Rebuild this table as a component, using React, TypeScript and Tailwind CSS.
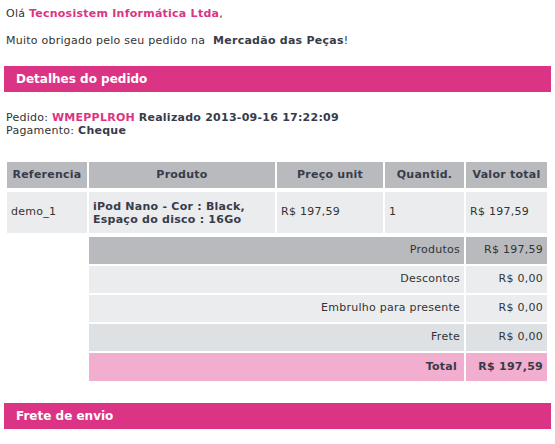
import React from "react";

const font = { fontFamily: '"DejaVu Sans", Verdana, sans-serif' };

export default function App() {
  const summary = [
    { label: "Produtos", value: "R$ 197,59", bg: "bg-[#b9babe]" },
    { label: "Descontos", value: "R$ 0,00", bg: "bg-[#ebecee]" },
    { label: "Embrulho para presente", value: "R$ 0,00", bg: "bg-[#ebecee]" },
    { label: "Frete", value: "R$ 0,00", bg: "bg-[#dde1e4]" },
  ];
  return (
    <div className="w-[555px] h-[444px] bg-white text-[11px] tracking-[0.25px] text-[#333333] overflow-hidden font-['DejaVu_Sans',Verdana,sans-serif]" style={font}>
      <div className="pl-[6px] pt-[7px] leading-[14px]">
        Olá <span className="font-bold text-[#db3484]">Tecnosistem Informática Ltda</span>,
      </div>
      <div className="pl-[6px] pt-[13px] leading-[14px]">
        Muito obrigado pelo seu pedido na <span className="font-bold text-[#383c4a]">&nbsp;Mercadão das Peças</span>!
      </div>
      <div className="mx-[4px] mt-[18px] h-[26px] bg-[#db3484] flex items-center pl-[12px] text-white font-bold text-[12px] tracking-normal">
        Detalhes do pedido
      </div>
      <div className="pl-[6px] pt-[19px] leading-[13px]">
        <div>
          Pedido: <span className="font-bold text-[#db3484]">WMEPPLROH</span>{" "}
          <span className="font-bold text-[#383c4a]">Realizado 2013-09-16 17:22:09</span>
        </div>
        <div>
          Pagamento: <span className="font-bold text-[#383c4a]">Cheque</span>
        </div>
      </div>
      <div className="ml-[7px] mr-[8px] mt-[25px] grid grid-cols-[80px_186px_106px_79px_81px] gap-x-[2px]">
        <div className="h-[26px] bg-[#b9babe] flex items-center justify-center font-bold text-[#383c4a]">Referencia</div>
        <div className="h-[26px] bg-[#b9babe] flex items-center justify-center font-bold text-[#383c4a]">Produto</div>
        <div className="h-[26px] bg-[#b9babe] flex items-center justify-center font-bold text-[#383c4a]">Preço unit</div>
        <div className="h-[26px] bg-[#b9babe] flex items-center justify-center font-bold text-[#383c4a]">Quantid.</div>
        <div className="h-[26px] bg-[#b9babe] flex items-center justify-center font-bold text-[#383c4a]">Valor total</div>

        <div className="mt-[4px] h-[41px] bg-[#ebecee] flex items-center pl-[4px]">demo_1</div>
        <div className="mt-[4px] h-[41px] bg-[#ebecee] flex items-center pl-[4px] font-bold text-[#383c4a] leading-[13px]">
          iPod Nano - Cor : Black,<br />Espaço do disco : 16Go
        </div>
        <div className="mt-[4px] h-[41px] bg-[#ebecee] flex items-center pl-[4px]">R$ 197,59</div>
        <div className="mt-[4px] h-[41px] bg-[#ebecee] flex items-center pl-[4px]">1</div>
        <div className="mt-[4px] h-[41px] bg-[#ebecee] flex items-center pl-[4px]">R$ 197,59</div>

        {summary.map((s, i) => (
          <React.Fragment key={s.label}>
            <div className={i === 0 ? "mt-[4px]" : "mt-[2px]"} />
            <div className={`${i === 0 ? "mt-[4px]" : "mt-[2px]"} col-span-3 h-[27px] ${s.bg} flex items-center justify-end pr-[4px]`}>
              {s.label}
            </div>
            <div className={`${i === 0 ? "mt-[4px]" : "mt-[2px]"} h-[27px] ${s.bg} flex items-center justify-end pr-[4px]`}>
              {s.value}
            </div>
          </React.Fragment>
        ))}
        <div className="mt-[2px]" />
        <div className="mt-[2px] col-span-3 h-[28px] bg-[#f1aecf] flex items-center justify-end pr-[7px] font-bold text-[#383c4a]">
          Total
        </div>
        <div className="mt-[2px] h-[28px] bg-[#f1aecf] flex items-center justify-end pr-[4px] font-bold text-[#383c4a]">
          R$ 197,59
        </div>
      </div>
      <div className="mx-[4px] mt-[22px] h-[26px] bg-[#db3484] flex items-center pl-[12px] text-white font-bold text-[12px] tracking-normal">
        Frete de envio
      </div>
    </div>
  );
}
